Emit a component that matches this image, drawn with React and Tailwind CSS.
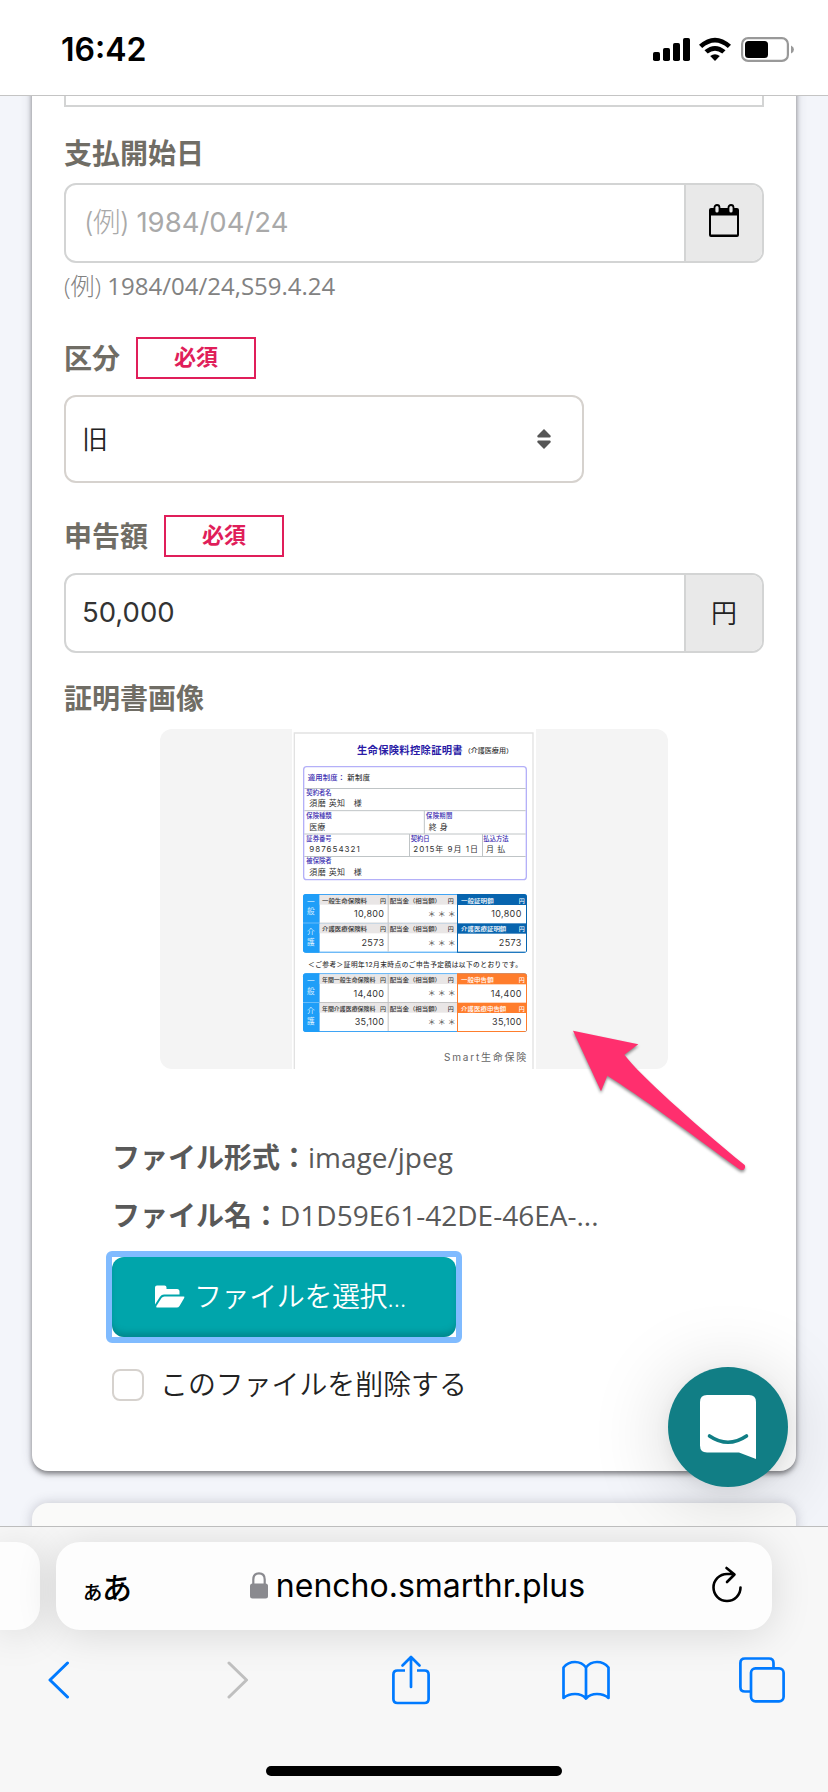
import React from "react";

const jp = "font-['Open_Sans','Noto_Sans_CJK_JP',sans-serif]";
const sys = "font-['Inter','Noto_Sans_CJK_JP',sans-serif]";

function StatusBar() {
  return (
    <header className="flex h-24 shrink-0 items-start justify-between border-b border-[#c4c4c4] bg-white pl-[61px] pr-[34px] pt-8">
      <span className={`${sys} text-[32px] font-semibold leading-9 text-black`}>16:42</span>
      <svg width="142" height="26" viewBox="0 0 142 26" className="mt-[5px]">
        <rect x="1" y="15" width="7" height="9" rx="1.8" />
        <rect x="11" y="11" width="7" height="13" rx="1.8" />
        <rect x="21" y="6" width="7" height="18" rx="1.8" />
        <rect x="31" y="1" width="7" height="23" rx="1.8" />
        <path d="M47 7.8 Q63 -6.5 79 7.8 L75.8 11 Q63 0 50.2 11Z" />
        <path d="M52.5 13.2 Q63 4.6 73.5 13.2 L70.3 16.5 Q63 10.8 55.7 16.5Z" />
        <path d="M58.2 19 Q63 15.6 67.8 19 L63 24Z" />
        <rect x="90.1" y="1.1" width="45.8" height="22.8" rx="6" fill="none" stroke="#999" strokeWidth="2.2" />
        <rect x="93" y="4" width="23" height="17" rx="3.5" />
        <path d="M139 8.5 q3 1.4 3 4 q0 2.6 -3 4z" fill="#999" />
      </svg>
    </header>
  );
}

function Required() {
  return (
    <span className="flex h-[42px] w-[120px] items-center justify-center border-2 border-[#e01e5a] pb-[4px] text-[22px] font-bold leading-none text-[#e01e5a]">
      必須
    </span>
  );
}

function Label({ children }) {
  return <span className="text-[28px] font-bold leading-7 text-[#706d65]">{children}</span>;
}

const Cell = ({ x, y, w, h, fill }) => <rect x={x} y={y} width={w} height={h} fill={fill} />;

function PlanTable({ y, accent, heads, rows }) {
  return (
    <g>
      <rect x="69" y={y} width="672" height="176" rx="9" fill="#3fa4f5" />
      <path d={`M531 ${y}h201a9 9 0 0 1 9 9v158a9 9 0 0 1 -9 9h-201z`} fill={accent} />
      <path d={`M78 ${y}h40v176h-40a9 9 0 0 1 -9 -9v-158a9 9 0 0 1 9 -9z`} fill="#1f9ef8" />
      <rect x="69" y={y + 86} width="49" height="2" fill="#8fcdfb" />
      {rows.map((r, i) => {
        const t = y + 3 + i * 86;
        return (
          <g key={r.value}>
            <Cell x={119} y={t} w={412} h={84} fill="#fff" />
            <Cell x={119} y={t} w={412} h={29} fill="#e9e6e6" />
            <Cell x={323} y={t} w={3} h={84} fill="#c4c4c4" />
            {i === 0 && <Cell x={119} y={t + 83} w={412} h={3} fill="#c4c4c4" />}
            <Cell x={534} y={t + 30} w={204} h={i ? 54 : 55} fill="#fff" />
            <text x="126" y={t + 23} fontSize="17" fontWeight="500" textLength={r.long ? 160 : 135} lengthAdjust="spacingAndGlyphs" fill="#333">{r.name}</text>
            <text x="300" y={t + 23} fontSize="18" fontWeight="500" fill="#333">円</text>
            <text x="329" y={t + 23} fontSize="17" fontWeight="500" textLength="154" lengthAdjust="spacingAndGlyphs" fill="#333">配当金（相当額）</text>
            <text x="503" y={t + 23} fontSize="18" fontWeight="500" fill="#333">円</text>
            <text x="543" y={t + 23} fontSize="17" fontWeight="500" textLength={i ? 136 : 98} lengthAdjust="spacingAndGlyphs" fill="#fff">{heads[i]}</text>
            <text x="716" y={t + 23} fontSize="18" fontWeight="500" fill="#fff">円</text>
            <text x="313" y={t + 67} fontSize="27" letterSpacing="1" textAnchor="end" fill="#333">{r.value}</text>
            <text x="443" y={t + 66} fontSize="24" textLength="84" fill="#555">＊＊＊</text>
            <text x="725" y={t + 67} fontSize="27" letterSpacing="1" textAnchor="end" fill="#333">{r.value}</text>
          </g>
        );
      })}
      <g fill="#d8efff" fontSize="23">
        <text x="81" y={y + 32}>一</text>
        <text x="81" y={y + 61}>般</text>
        <text x="81" y={y + 122}>介</text>
        <text x="81" y={y + 152}>護</text>
      </g>
    </g>
  );
}

function Certificate() {
  return (
    <svg width="244" height="340" viewBox="36 27 732 1020" fontFamily="Inter, 'Noto Sans CJK JP', sans-serif" className="bg-white">
      <path d="M43 1050V39H759V1050" fill="none" stroke="#e2e2e2" strokeWidth="4" />
      <text x="231" y="101" fontSize="31" fontWeight="700" textLength="317" fill="#2a1ba6">生命保険料控除証明書</text>
      <text x="551" y="98" fontSize="19" fontWeight="500" textLength="148" lengthAdjust="spacingAndGlyphs" fill="#333">（介護医療用）</text>
      <rect x="71" y="140" width="668" height="339" rx="9" fill="none" stroke="#b4b0f8" strokeWidth="4" />
      <path d="M73 205.500H737M73 272H737M73 342H737M73 409.500H737M433 272V342M388.500 342V409M607.500 342V409" stroke="#bfc4c6" strokeWidth="3" fill="none" />
      <g fill="#3a2cb0" fontSize="19" fontWeight="500">
        <text x="83" y="179" fontSize="22" textLength="112">適用制度：</text>
        <text x="79" y="226">契約者名</text>
        <text x="79" y="294">保険種類</text>
        <text x="438" y="294" textLength="79">保険期間</text>
        <text x="79" y="362">証券番号</text>
        <text x="392" y="362">契約日</text>
        <text x="610" y="362">払込方法</text>
        <text x="79" y="430">被保険者</text>
      </g>
      <g fill="#333" fontSize="24">
        <text x="202" y="179" fontSize="22" fontWeight="500" textLength="68">新制度</text>
        <text x="88" y="259" textLength="157">須磨 英知　様</text>
        <text x="88" y="329">医療</text>
        <text x="446" y="329" textLength="57">終 身</text>
        <text x="88" y="396" textLength="151">987654321</text>
        <text x="400" y="396" textLength="194">2015年 9月 1日</text>
        <text x="618" y="396" textLength="58">月 払</text>
        <text x="88" y="466" textLength="157">須磨 英知　様</text>
      </g>
      <PlanTable
        y={522}
        accent="#0764ae"
        heads={["一般証明額", "介護医療証明額"]}
        rows={[{ name: "一般生命保険料", value: "10,800" }, { name: "介護医療保険料", value: "2573" }]}
      />
      <text x="84" y="741" fontSize="20" fontWeight="500" textLength="642" fill="#333">＜ご参考＞証明年12月末時点のご申告予定額は以下のとおりです。</text>
      <PlanTable
        y={760}
        accent="#ff7d2c"
        heads={["一般申告額", "介護医療申告額"]}
        rows={[{ name: "年間一般生命保険料", value: "14,400", long: true }, { name: "年間介護医療保険料", value: "35,100", long: true }]}
      />
      <text x="492" y="1023" fontSize="30" textLength="247" fill="#666">Smart生命保険</text>
    </svg>
  );
}

function Arrow() {
  return (
    <svg width="200" height="170" viewBox="0 0 600 510" className="absolute left-[560px] top-[914px] overflow-visible drop-shadow-[0_2px_1.5px_rgba(0,0,0,0.45)]">
      <path d="M39 62L235 103L193 134C240 195 390 330 554 465Q558 473 551 479Q544 482 537 477C380 362 240 258 142 197L123 244Z" fill="#ff2f6e" />
    </svg>
  );
}

function ChatButton() {
  return (
    <button className="absolute left-[668px] top-[1271px] flex size-[120px] items-center justify-center rounded-full bg-[#117e85] shadow-[0_4px_16px_rgba(0,0,0,0.06),0_8px_80px_rgba(0,0,0,0.18)]">
      <svg width="56" height="64" viewBox="0 0 56 64">
        <path d="M7 0H49Q56 0 56 7V64L39 57.500H7Q0 57.500 0 50.500V7Q0 0 7 0Z" fill="#fff" />
        <path d="M9.500 41Q28 53.500 46.500 41" fill="none" stroke="#117e85" strokeWidth="3.600" strokeLinecap="round" />
      </svg>
    </button>
  );
}

function Field({ children, addon }) {
  return (
    <div className="flex h-20 overflow-hidden rounded-xl border-2 border-[#d3d4d4] bg-white">
      <div className="flex flex-1 items-center pl-[18px]">{children}</div>
      <div className="flex w-[78px] items-center justify-center border-l-2 border-[#d3d4d4] bg-[#e9e9e9]">{addon}</div>
    </div>
  );
}

function FormCard() {
  return (
    <section className={`${jp} mx-8 -mt-5 h-[1395px] rounded-b-2xl bg-white px-8 pt-5 shadow-[0_3px_5px_rgba(0,0,0,0.42),0_0_12px_rgba(60,60,80,0.2)]`}>
      <div className="h-[11px] border-x-2 border-b-2 border-[#d3d4d4]" />
      <div className="flex h-[76px] flex-col pt-8"><Label>支払開始日</Label></div>
      <Field
        addon={
          <svg width="30" height="34" viewBox="0 0 30 34" className="-mt-1">
            <path d="M0 6Q0 4 2 4H28Q30 4 30 6V31Q30 33 28 33H2Q0 33 0 31ZM2 11.500V30.500H28V11.500Z" fillRule="evenodd" />
            <rect x="5.500" y="1" width="5" height="8.500" rx="2.500" fill="#e9e9e9" stroke="#000" strokeWidth="1.800" />
            <rect x="19.500" y="1" width="5" height="8.500" rx="2.500" fill="#e9e9e9" stroke="#000" strokeWidth="1.800" />
          </svg>
        }
      >
        <span className={`${sys} whitespace-pre text-[27.500px] text-[#a9a9a9]`}>
          <span className="font-light tracking-[-0.5px]">(例) </span>1984/04/24
        </span>
      </Field>
      <p className="mt-[9px] text-2xl leading-7 text-[#828282]"><span className="font-light">(例)</span> 1984/04/24,S59.4.24</p>
      <div className="mt-[37px] flex h-[42px] items-center gap-4"><Label>区分</Label><Required /></div>
      <div className="mt-4 flex h-[88px] w-[520px] items-center justify-between rounded-xl border-2 border-[#d6d2ce] pl-4 pr-[31px]">
        <span className="text-[26px] font-[350] text-[#222]">旧</span>
        <svg width="14" height="20" viewBox="0 0 14 20" fill="#555">
          <path d="M7 0L13.700 6.800Q14 8.600 12.800 8.600H1.200Q0 8.600 .3 6.800Z" />
          <path d="M7 20L13.700 13.200Q14 11.400 12.800 11.400H1.200Q0 11.400 .3 13.200Z" />
        </svg>
      </div>
      <div className="mt-8 flex h-[42px] items-center gap-4"><Label>申告額</Label><Required /></div>
      <div className="mt-4">
        <Field addon={<span className="text-[26px] font-[350] text-[#222]">円</span>}>
          <span className={`${sys} -ml-0.5 text-[27.500px] text-[#333]`}>50,000</span>
        </Field>
      </div>
      <div className="mt-[31px] flex h-7"><Label>証明書画像</Label></div>
      <div className="mx-auto mt-[17px] flex h-[340px] w-[508px] justify-center overflow-hidden rounded-xl bg-[#f4f4f4]">
        <Certificate />
      </div>
      <div className="px-12">
        <p className="mt-[74px] whitespace-nowrap text-[28px] leading-7 text-[#595959]"><b>ファイル形式：</b>image/jpeg</p>
        <p className="mt-[30px] whitespace-nowrap text-[28px] leading-7 text-[#595959]"><b>ファイル名：</b>D1D59E61-42DE-46EA-...</p>
        <div className="mt-[22px] -ml-1.5 h-[92px] w-[356px] rounded-md border-[6px] border-[#80bbff] bg-white">
          <button className="flex h-20 w-[344px] items-center rounded-xl bg-[#00a5ab] pl-[43px] text-[28px] font-[350] text-white shadow-[inset_0_-6px_6px_-2px_rgba(0,80,85,0.35)]">
            <svg width="30" height="23" viewBox="0 0 30 23" fill="#fff" className="-mt-0.5">
              <path d="M0 2.500Q0 .5 2 .5H9.500Q11.500 .5 11.500 2.500V4H22Q24.500 4 24.500 6.500V9.500H9Q6.500 9.500 5 11.800L0 19.500Z" />
              <path d="M9.500 11.500H28.500Q30 11.500 29.200 12.900L24.500 21Q23.500 22.500 21.800 22.500H2.200Q.6 22.500 1.400 21L6.500 13Q7.500 11.500 9.500 11.500Z" />
            </svg>
            <span className="ml-[9px] pb-0.5 tracking-[-0.4px]">ファイルを選択...</span>
          </button>
        </div>
        <label className="mt-[26px] flex h-8 items-center gap-4 text-[27.900px] font-[350] text-[#222]">
          <span className="size-8 rounded-lg border-2 border-[#d6d2ce] bg-white" />
          <span className="pb-px">このファイルを削除する</span>
        </label>
      </div>
    </section>
  );
}

function BrowserBar() {
  const shadow = "shadow-[0_4px_40px_rgba(0,0,0,0.13)]";
  return (
    <footer className={`${sys} flex h-[266px] shrink-0 flex-col overflow-hidden border-t border-[#bdbdbd] bg-[#f7f7f7]`}>
      <div className="flex gap-4 pt-[15px]">
        <div className={`h-[88px] w-10 rounded-r-3xl bg-[#fdfdfd] ${shadow}`} />
        <div className={`flex h-[88px] w-[716px] items-center justify-between rounded-3xl bg-[#fdfdfd] pl-[25px] pr-[29px] text-black ${shadow}`}>
          <span className="flex items-baseline pt-1 leading-none"><span className="text-[23px] font-medium">ぁ</span><span className="-ml-0.5 text-[30px] font-medium">あ</span></span>
          <span className="mr-[9px] flex items-center gap-2 text-[32px]">
            <svg width="18" height="27" viewBox="0 0 18 27" className="-mt-0.5">
              <path d="M3.300 12V7.500Q3.300 1.300 9 1.300T14.700 7.500V12" fill="none" stroke="#8a8a8f" strokeWidth="2.200" />
              <rect y="11.500" width="18" height="15" rx="2.500" fill="#8a8a8f" />
            </svg>
            nencho.smarthr.plus
          </span>
          <svg width="31" height="37" viewBox="0 0 31 37" fill="none" stroke="#000" strokeWidth="2.600" strokeLinecap="round" strokeLinejoin="round" className="-mt-1">
            <path d="M28.500 21.500A13.500 13.500 0 1 1 15 8H22M14.500 2L22.500 8.500L15 16" />
          </svg>
        </div>
      </div>
      <nav className="flex h-[100px] items-center pl-12">
        <svg width="22" height="38" viewBox="0 0 22 38" fill="none" stroke="#007aff" strokeWidth="3" strokeLinecap="round" strokeLinejoin="round"><path d="M19.500 2L2 19L19.500 36" /></svg>
        <svg width="22" height="38" viewBox="0 0 22 38" fill="none" stroke="#bfbfbf" strokeWidth="3" strokeLinecap="round" strokeLinejoin="round" className="ml-[157px]"><path d="M2 2L19.500 19L2 36" /></svg>
        <svg width="38" height="50" viewBox="0 0 38 50" fill="none" stroke="#007aff" strokeWidth="2.700" strokeLinejoin="round" className="ml-[143px]">
          <path d="M13 15.500H5.500Q1.400 15.500 1.400 19.500V44Q1.400 48 5.500 48H32.500Q36.600 48 36.600 44V19.500Q36.600 15.500 32.500 15.500H25" />
          <path d="M19 32V2M10.500 10.500L19 2L27.500 10.500" strokeLinecap="round" />
        </svg>
        <svg width="48" height="40" viewBox="0 0 48 40" fill="none" stroke="#007aff" strokeWidth="2.700" strokeLinejoin="round" className="ml-[132px]">
          <path d="M24 7.500Q20 2 13 2T1.500 7.500V38Q6 34 13 34T24 38.500V7.500Q28 2 35 2T46.500 7.500V38Q42 34 35 34T24 38.500" />
        </svg>
        <svg width="46" height="46" viewBox="0 0 46 46" fill="none" stroke="#007aff" strokeWidth="2.700" className="ml-[129px]">
          <path d="M12 34.500H6Q1.400 34.500 1.400 30V6Q1.400 1.500 6 1.500H30Q34.500 1.500 34.500 6V11" />
          <rect x="12" y="11.300" width="32.600" height="33" rx="4.500" />
        </svg>
      </nav>
      <div className="mx-auto mt-9 h-2.5 w-[296px] rounded-full bg-black" />
    </footer>
  );
}

export default function App() {
  return (
    <div className="flex h-[1792px] w-[828px] flex-col overflow-hidden bg-white">
      <StatusBar />
      <main className="relative h-[1430px] shrink-0 overflow-hidden bg-[#f3f5fa]">
        <FormCard />
        <section className="mx-8 mt-8 h-20 rounded-t-2xl bg-[#fafaf9] shadow-[0_0_12px_rgba(60,60,80,0.25)]" />
        <Arrow />
        <ChatButton />
      </main>
      <BrowserBar />
    </div>
  );
}
